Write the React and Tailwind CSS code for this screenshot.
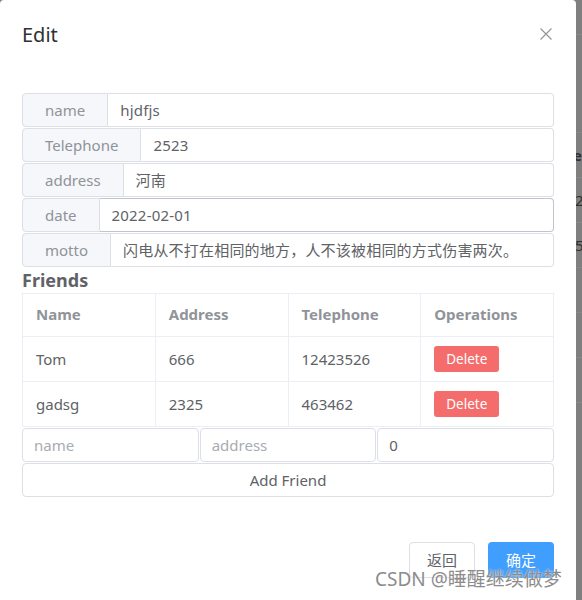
const fields = [
    { label: 'name', value: 'hjdfjs' },
    { label: 'Telephone', value: '2523' },
    { label: 'address', value: '河南' },
    { label: 'date', value: '2022-02-01', hover: true },
    { label: 'motto', value: '闪电从不打在相同的地方，人不该被相同的方式伤害两次。' },
];

const friends = [
    { name: 'Tom', address: '666', telephone: '12423526' },
    { name: 'gadsg', address: '2325', telephone: '463462' },
];

const font = { fontFamily: '"Noto Sans", "Noto Sans CJK SC", sans-serif' };

export default function App() {
    return (
        <div className="flex h-[600px] w-[582px] overflow-hidden bg-[#7f7f7f]" style={font}>
            <div className="relative h-[620px] w-[576px] shrink-0 rounded-[4px] bg-white">
                <header className="flex items-start justify-between pl-[22px] pr-[24px] pt-[21px]">
                    <h1 className="text-[20px] leading-[28px] text-[#303133]">Edit</h1>
                    <svg width="12" height="12" viewBox="0 0 12 12" className="mt-[7px]" fill="none" stroke="#909399" strokeWidth="1.1">
                        <path d="M0.5 0.5 L11.5 11.5 M11.5 0.5 L0.5 11.5" />
                    </svg>
                </header>

                <div className="mt-[44px] px-[22px]">
                    {fields.map((field) => (
                        <Field key={field.label} {...field} />
                    ))}

                    <h2 className="text-[18px] font-bold leading-[25px] text-[#606266]">Friends</h2>

                    <div className="grid grid-cols-4 border-l border-t border-[#ebeef5] text-[15px]">
                        {['Name', 'Address', 'Telephone', 'Operations'].map((title) => (
                            <div key={title} className="flex h-[43px] items-center border-b border-r border-[#ebeef5] pb-[2px] pl-[13px] font-bold text-[#909399]">
                                {title}
                            </div>
                        ))}
                        {friends.map((friend) => (
                            <FriendRow key={friend.name} friend={friend} />
                        ))}
                    </div>

                    <div className="mt-[1px] grid grid-cols-3 gap-[1px]">
                        <TextBox placeholder="name" />
                        <TextBox placeholder="address" />
                        <TextBox value="0" />
                    </div>

                    <button type="button" className="mt-[1px] h-[34px] w-full rounded-[4px] border border-[#dcdfe6] bg-white text-[15px] text-[#606266]">
                        Add Friend
                    </button>
                </div>

                <footer className="mt-[45px] flex justify-end gap-[13px] pr-[22px]">
                    <button type="button" className="h-[36px] w-[66px] rounded-[4px] border border-[#dcdfe6] bg-white text-[15px] text-[#606266]">返回</button>
                    <button type="button" className="h-[36px] w-[66px] rounded-[4px] bg-[#409eff] text-[15px] text-white">确定</button>
                </footer>

                <div className="pointer-events-none absolute left-[375px] top-[566px] whitespace-nowrap text-[19px] leading-[26px] text-[#8c8c8c] [text-shadow:0_0_2px_#fff]">
                    CSDN @睡醒继续做梦
                </div>
            </div>

            <BackdropStrip />
        </div>
    );
}

function Field({ label, value, hover = false }) {
    const border = hover ? 'border-[#c0c4cc]' : 'border-[#dcdfe6]';

    return (
        <div className="mb-[1px] flex h-[34px] text-[15px]">
            <span className="flex items-center rounded-l-[4px] border border-[#dcdfe6] bg-[#f5f7fa] px-[22px] text-[#909399]">{label}</span>
            <span className={`flex flex-1 items-center rounded-r-[4px] border border-l-0 ${border} px-[12px] text-[#606266] tracking-[0.2px]`}>{value}</span>
        </div>
    );
}

function FriendRow({ friend }) {
    const cell = 'flex h-[45px] items-center border-b border-r border-[#ebeef5] pl-[13px] text-[#606266]';

    return (
        <>
            <div className={cell}>{friend.name}</div>
            <div className={cell}>{friend.address}</div>
            <div className={cell}>{friend.telephone}</div>
            <div className={cell}>
                <button type="button" className="h-[26px] w-[65px] rounded-[3px] bg-[#f56c6c] text-[13.5px] text-white">Delete</button>
            </div>
        </>
    );
}

function TextBox({ placeholder, value }) {
    return (
        <div className="flex h-[34px] items-center rounded-[4px] border border-[#dcdfe6] px-[11px] text-[15px]">
            {value ? <span className="text-[#606266]">{value}</span> : <span className="text-[#a8abb2]">{placeholder}</span>}
        </div>
    );
}

function BackdropStrip() {
    return (
        <div className="flex-1 overflow-hidden text-[15px] text-[#303030]">
            <div className="h-[35px] border-b border-[#888888]" />
            <div className="h-[98px] border-b border-[#888888]" />
            <div className="flex h-[45px] items-center border-b border-[#888888] font-bold">
                <span className="-ml-[3px]">e</span>
            </div>
            <div className="flex h-[45px] items-center border-b border-[#888888]">
                <span className="-ml-[1px]">24</span>
            </div>
            <div className="flex h-[45px] items-center border-b border-[#888888]">
                <span className="-ml-[1px]">53</span>
            </div>
            <div className="h-[45px] border-b border-[#888888]" />
            <div className="h-[45px] border-b border-[#888888]" />
            <div className="h-[45px] border-b border-[#888888]" />
        </div>
    );
}
